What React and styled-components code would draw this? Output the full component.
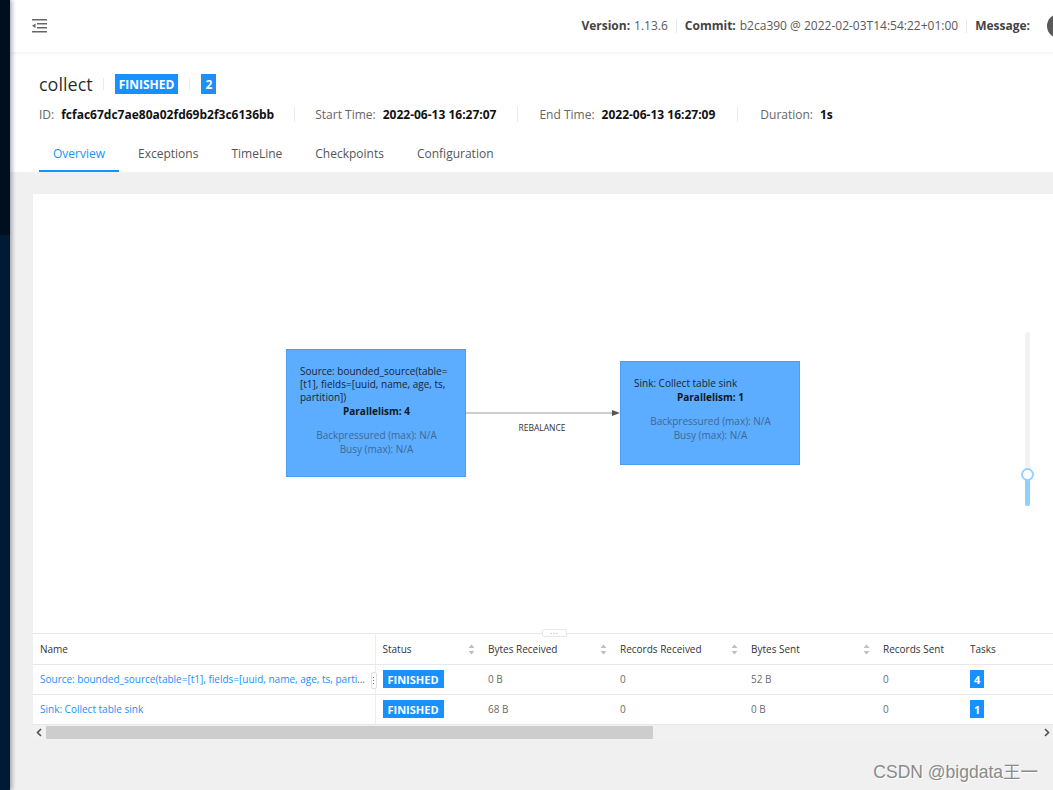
import React from 'react'
import styled, { createGlobalStyle } from 'styled-components'

const GlobalStyle = createGlobalStyle`
    html, body {
        margin: 0;
        padding: 0;
        background: #f0f0f0;
        font-family: "Open Sans", "Noto Sans", "Liberation Sans", sans-serif;
    }
    * { box-sizing: border-box; }
`

const Layout = styled.div`
    display: flex;
    width: 1053px;
    height: 790px;
    overflow: hidden;
`

const Sider = styled.div`
    flex: 0 0 10px;
    background: linear-gradient(#000f1e 0, #000f1e 235px, #001a33 235px);
    box-shadow: 2px 0 4px rgba(0, 21, 41, 0.35);
    z-index: 2;
`

const Main = styled.div`
    flex: 1;
    display: flex;
    flex-direction: column;
    min-width: 0;
    overflow: hidden;
    position: relative;
`

const Header = styled.div`
    height: 52px;
    margin-right: -34px;
    flex: 0 0 52px;
    display: flex;
    align-items: center;
    padding: 0 16px 0 22px;
    background: #fff;
    box-shadow: 0 1px 4px rgba(0, 21, 41, 0.08);
    z-index: 1;
`

const MenuIcon = styled.svg`
    width: 15px;
    height: 14px;
    color: #666;
`

const InfoGroup = styled.div`
    margin-left: auto;
    display: flex;
    align-items: center;
    font-size: 12px;
    color: #595959;
`

const InfoItem = styled.div`
    padding: 0 ${p => (p.last ? 13 : 8)}px 0 ${p => (p.first ? 0 : 8)}px;
    border-left: ${p => (p.first ? 'none' : '1px solid #e8e8e8')};
    line-height: 14px;
    b { color: #434343; font-weight: 700; margin-right: 4px; }
`

const Avatar = styled.div`
    width: 24px;
    height: 24px;
    border-radius: 50%;
    background: #595959;
`

const PageHeader = styled.div`
    background: #fff;
    padding: 20px 0 0 29px;
    flex: 0 0 auto;
`

const TitleRow = styled.div`
    display: flex;
    align-items: center;
    height: 24px;
`

const Title = styled.div`
    font-size: 18px;
    color: rgba(0, 0, 0, 0.85);
    line-height: 24px;
`

const Divider = styled.span`
    display: inline-block;
    width: 1px;
    height: ${p => p.h || 12}px;
    background: #ececec;
    margin: 0 ${p => p.m || 11}px 0 ${p => p.ml || p.m || 11}px;
`

const Badge = styled.span`
    display: inline-flex;
    align-items: center;
    justify-content: center;
    height: ${p => p.h || 20}px;
    padding: 0 ${p => p.px || 4}px;
    background: #1890ff;
    color: #fff;
    font-weight: 700;
    font-size: ${p => p.fs || 12}px;
`

const MetaRow = styled.div`
    display: flex;
    align-items: center;
    margin-top: 10px;
    font-size: 12px;
    color: #666;
    height: 16px;
`

const MetaItem = styled.div`
    display: flex;
    align-items: center;
    b { color: #111; margin-left: 7px; font-weight: 700; }
`

const Tabs = styled.div`
    display: flex;
    margin-top: 15px;
    height: 35px;
`

const Tab = styled.div`
    padding: 0 14px;
    margin-right: 5px;
    font-size: 12px;
    line-height: 33px;
    color: ${p => (p.active ? '#1890ff' : '#555')};
    border-bottom: 2px solid ${p => (p.active ? '#1890ff' : 'transparent')};
`

const Content = styled.div`
    flex: 1;
    padding: 22px 0 0 23px;
    background: #f0f0f0;
`

const Card = styled.div`
    width: 1020px;
    background: #fff;
`

const Graph = styled.div`
    position: relative;
    height: 439px;
`

const Node = styled.div`
    position: absolute;
    left: ${p => p.x}px;
    top: ${p => p.y}px;
    width: ${p => p.w}px;
    height: ${p => p.h}px;
    background: #5cacff;
    border: 1px solid #4a9ff5;
    padding: ${p => p.pt}px 12px 0 13px;
    font-size: 10px;
    line-height: 13px;
    color: #1b2530;
`

const NodeName = styled.div`
    text-align: left;
`

const NodePar = styled.div`
    text-align: center;
    font-weight: 700;
    color: #0d1824;
    margin-top: 1px;
`

const NodeStat = styled.div`
    text-align: center;
    color: #3f6996;
    margin-top: ${p => p.mt || 0}px;
    line-height: 14px;
`

const EdgeSvg = styled.svg`
    position: absolute;
    left: 433px;
    top: 210px;
`

const Slider = styled.div`
    position: absolute;
    left: 992px;
    top: 138px;
    width: 5px;
    height: 174px;
    background: #f2f2f2;
    border-radius: 2px;
`

const SliderFill = styled.div`
    position: absolute;
    left: 0;
    bottom: 0;
    width: 5px;
    height: 33px;
    background: #8fd0ff;
    border-radius: 2px;
`

const SliderHandle = styled.div`
    position: absolute;
    left: -4px;
    bottom: 25px;
    width: 13px;
    height: 13px;
    border-radius: 50%;
    border: 2px solid #91d5ff;
    background: #fff;
`

const Splitter = styled.div`
    position: relative;
    height: 0;
    border-top: 1px solid #e8e8e8;
`

const SplitHandle = styled.div`
    position: absolute;
    left: 509px;
    top: -5px;
    width: 25px;
    height: 8px;
    border: 1px solid #e8e8e8;
    border-radius: 2px;
    background: #fff;
    font-size: 7px;
    line-height: 4px;
    text-align: center;
    color: #888;
    letter-spacing: 1px;
`

const Table = styled.table`
    width: 1020px;
    border-collapse: collapse;
    table-layout: fixed;
    font-size: 10px;
`

const Th = styled.th`
    height: 30px;
    text-align: left;
    font-weight: 400;
    color: #333;
    padding: 0 7px;
    border-bottom: 1px solid #e8e8e8;
    border-left: ${p => (p.split ? '1px solid #eee' : 'none')};
    box-shadow: ${p => (p.fixed ? '-6px 0 6px -4px rgba(0,0,0,0.12)' : 'none')};
    position: relative;
`

const Td = styled.td`
    height: 30px;
    padding: 0 7px;
    color: #6b6b6b;
    border-bottom: 1px solid #e8e8e8;
    border-left: ${p => (p.split ? '1px solid #eee' : 'none')};
    box-shadow: ${p => (p.fixed ? '-6px 0 6px -4px rgba(0,0,0,0.12)' : 'none')};
    white-space: nowrap;
    overflow: ${p => (p.split ? 'visible' : 'hidden')};
    text-overflow: ellipsis;
    position: relative;
`

const NameLink = styled.span`
    color: #1890ff;
`

const Sorter = styled.svg`
    position: absolute;
    right: 6px;
    top: 10px;
`

const Grip = styled.span`
    position: absolute;
    left: -5px;
    top: 7px;
    width: 6px;
    height: 17px;
    border: 1px solid #e0e0e0;
    border-radius: 2px;
    background: #fff;
    display: flex;
    flex-direction: column;
    align-items: center;
    justify-content: center;
    gap: 2px;
    z-index: 1;
    i { width: 1px; height: 1px; background: #777; }
`

const ScrollBar = styled.div`
    display: flex;
    align-items: center;
    height: 15px;
    background: #f1f1f1;
`

const ScrollArrow = styled.svg`
    flex: 0 0 13px;
    margin-left: ${p => (p.right ? 'auto' : 0)};
`

const ScrollThumb = styled.div`
    height: 13px;
    width: 607px;
    background: #cdcdcd;
`

const Watermark = styled.div`
    position: absolute;
    right: 15px;
    bottom: 7px;
    font-family: "Liberation Sans", "Noto Sans CJK SC", sans-serif;
    font-size: 17.5px;
    color: #8a8a8a;
    text-shadow: 1px 1px 0 #fff;
`

const SortIcon = () => (
    <Sorter width="7" height="11" viewBox="0 0 7 11">
        <path d="M3.5 0.5 L6.5 4 L0.5 4 Z" fill="#bfbfbf" />
        <path d="M3.5 10.5 L6.5 7 L0.5 7 Z" fill="#bfbfbf" />
    </Sorter>
)

const Chevron = ({ right }) => (
    <ScrollArrow right={right} width="13" height="13" viewBox="0 0 13 13">
        <path d={right ? 'M5 3 L8.5 6.5 L5 10' : 'M8 3 L4.5 6.5 L8 10'} fill="none" stroke="#505050" strokeWidth="1.6" />
    </ScrollArrow>
)

const columns = [
    { title: 'Name', w: 342 },
    { title: 'Status', w: 106, sort: true, split: true },
    { title: 'Bytes Received', w: 132, sort: true },
    { title: 'Records Received', w: 131, sort: true },
    { title: 'Bytes Sent', w: 132, sort: true },
    { title: 'Records Sent', w: 87 },
    { title: 'Tasks', w: 90, fixed: true },
]

const rows = [
    { name: 'Source: bounded_source(table=[t1], fields=[uuid, name, age, ts, partition])', br: '0 B', rr: '0', bs: '52 B', rs: '0', tasks: 4 },
    { name: 'Sink: Collect table sink', br: '68 B', rr: '0', bs: '0 B', rs: '0', tasks: 1 },
]

const App = () => {
    return (
        <>
            <GlobalStyle />
            <Layout>
                <Sider />
                <Main>
                    <Header>
                        <MenuIcon viewBox="0 0 15 14">
                            <rect x="0" y="0" width="15" height="1.5" fill="currentColor" />
                            <rect x="5" y="4" width="10" height="1.5" fill="currentColor" />
                            <rect x="5" y="8" width="10" height="1.5" fill="currentColor" />
                            <rect x="0" y="12" width="15" height="1.5" fill="currentColor" />
                            <path d="M0 6.7 L3.5 4.5 L3.5 9 Z" fill="currentColor" />
                        </MenuIcon>
                        <InfoGroup>
                            <InfoItem first><b>Version:</b>1.13.6</InfoItem>
                            <InfoItem><b>Commit:</b>b2ca390 @ 2022-02-03T14:54:22+01:00</InfoItem>
                            <InfoItem last><b>Message:</b></InfoItem>
                            <Avatar />
                        </InfoGroup>
                    </Header>
                    <PageHeader>
                        <TitleRow>
                            <Title>collect</Title>
                            <Divider ml={10} m={11} />
                            <Badge>FINISHED</Badge>
                            <Divider m={11} />
                            <Badge>2</Badge>
                        </TitleRow>
                        <MetaRow>
                            <MetaItem>ID: <b>fcfac67dc7ae80a02fd69b2f3c6136bb</b></MetaItem>
                            <Divider h={16} m={20} />
                            <MetaItem>Start Time: <b>2022-06-13 16:27:07</b></MetaItem>
                            <Divider h={16} m={21} />
                            <MetaItem>End Time: <b>2022-06-13 16:27:09</b></MetaItem>
                            <Divider h={16} m={22} />
                            <MetaItem>Duration: <b>1s</b></MetaItem>
                        </MetaRow>
                        <Tabs>
                            <Tab active>Overview</Tab>
                            <Tab>Exceptions</Tab>
                            <Tab>TimeLine</Tab>
                            <Tab>Checkpoints</Tab>
                            <Tab>Configuration</Tab>
                        </Tabs>
                    </PageHeader>
                    <Content>
                        <Card>
                            <Graph>
                                <Node x={253} y={155} w={180} h={128} pt={15}>
                                    <NodeName>Source: bounded_source(table=<br />[t1], fields=[uuid, name, age, ts,<br />partition])</NodeName>
                                    <NodePar>Parallelism: 4</NodePar>
                                    <NodeStat mt={10}>Backpressured (max): N/A</NodeStat>
                                    <NodeStat>Busy (max): N/A</NodeStat>
                                </Node>
                                <EdgeSvg width="160" height="30" viewBox="0 0 160 30">
                                    <line x1="0" y1="9" x2="150" y2="9" stroke="#9a9a9a" strokeWidth="1" />
                                    <path d="M146 6 L154 9 L146 12 Z" fill="#555" />
                                    <text x="76" y="27" fontSize="8.5" fill="#333" textAnchor="middle" fontFamily="Open Sans, sans-serif">REBALANCE</text>
                                </EdgeSvg>
                                <Node x={587} y={167} w={180} h={104} pt={15}>
                                    <NodeName>Sink: Collect table sink</NodeName>
                                    <NodePar>Parallelism: 1</NodePar>
                                    <NodeStat mt={10}>Backpressured (max): N/A</NodeStat>
                                    <NodeStat>Busy (max): N/A</NodeStat>
                                </Node>
                                <Slider>
                                    <SliderFill />
                                    <SliderHandle />
                                </Slider>
                            </Graph>
                            <Splitter>
                                <SplitHandle>...</SplitHandle>
                            </Splitter>
                            <Table>
                                <colgroup>
                                    {columns.map(c => <col key={c.title} style={{ width: c.w }} />)}
                                </colgroup>
                                <thead>
                                    <tr>
                                        {columns.map(c => (
                                            <Th key={c.title} split={c.split} fixed={c.fixed}>
                                                {c.title}
                                                {c.sort && <SortIcon />}
                                            </Th>
                                        ))}
                                    </tr>
                                </thead>
                                <tbody>
                                    {rows.map((r, i) => (
                                        <tr key={r.name}>
                                            <Td>
                                                <NameLink>{r.name}</NameLink>
                                            </Td>
                                            <Td split>
                                                {i === 0 && <Grip><i /><i /><i /></Grip>}
                                                <Badge h={18} fs={11} px={5}>FINISHED</Badge>
                                            </Td>
                                            <Td>{r.br}</Td>
                                            <Td>{r.rr}</Td>
                                            <Td>{r.bs}</Td>
                                            <Td>{r.rs}</Td>
                                            <Td fixed>
                                                <Badge h={18} fs={11} px={4}>{r.tasks}</Badge>
                                            </Td>
                                        </tr>
                                    ))}
                                </tbody>
                            </Table>
                            <ScrollBar>
                                <Chevron />
                                <ScrollThumb />
                                <Chevron right />
                            </ScrollBar>
                        </Card>
                    </Content>
                    <Watermark>CSDN @bigdata王一</Watermark>
                </Main>
            </Layout>
        </>
    )
}

export default App
